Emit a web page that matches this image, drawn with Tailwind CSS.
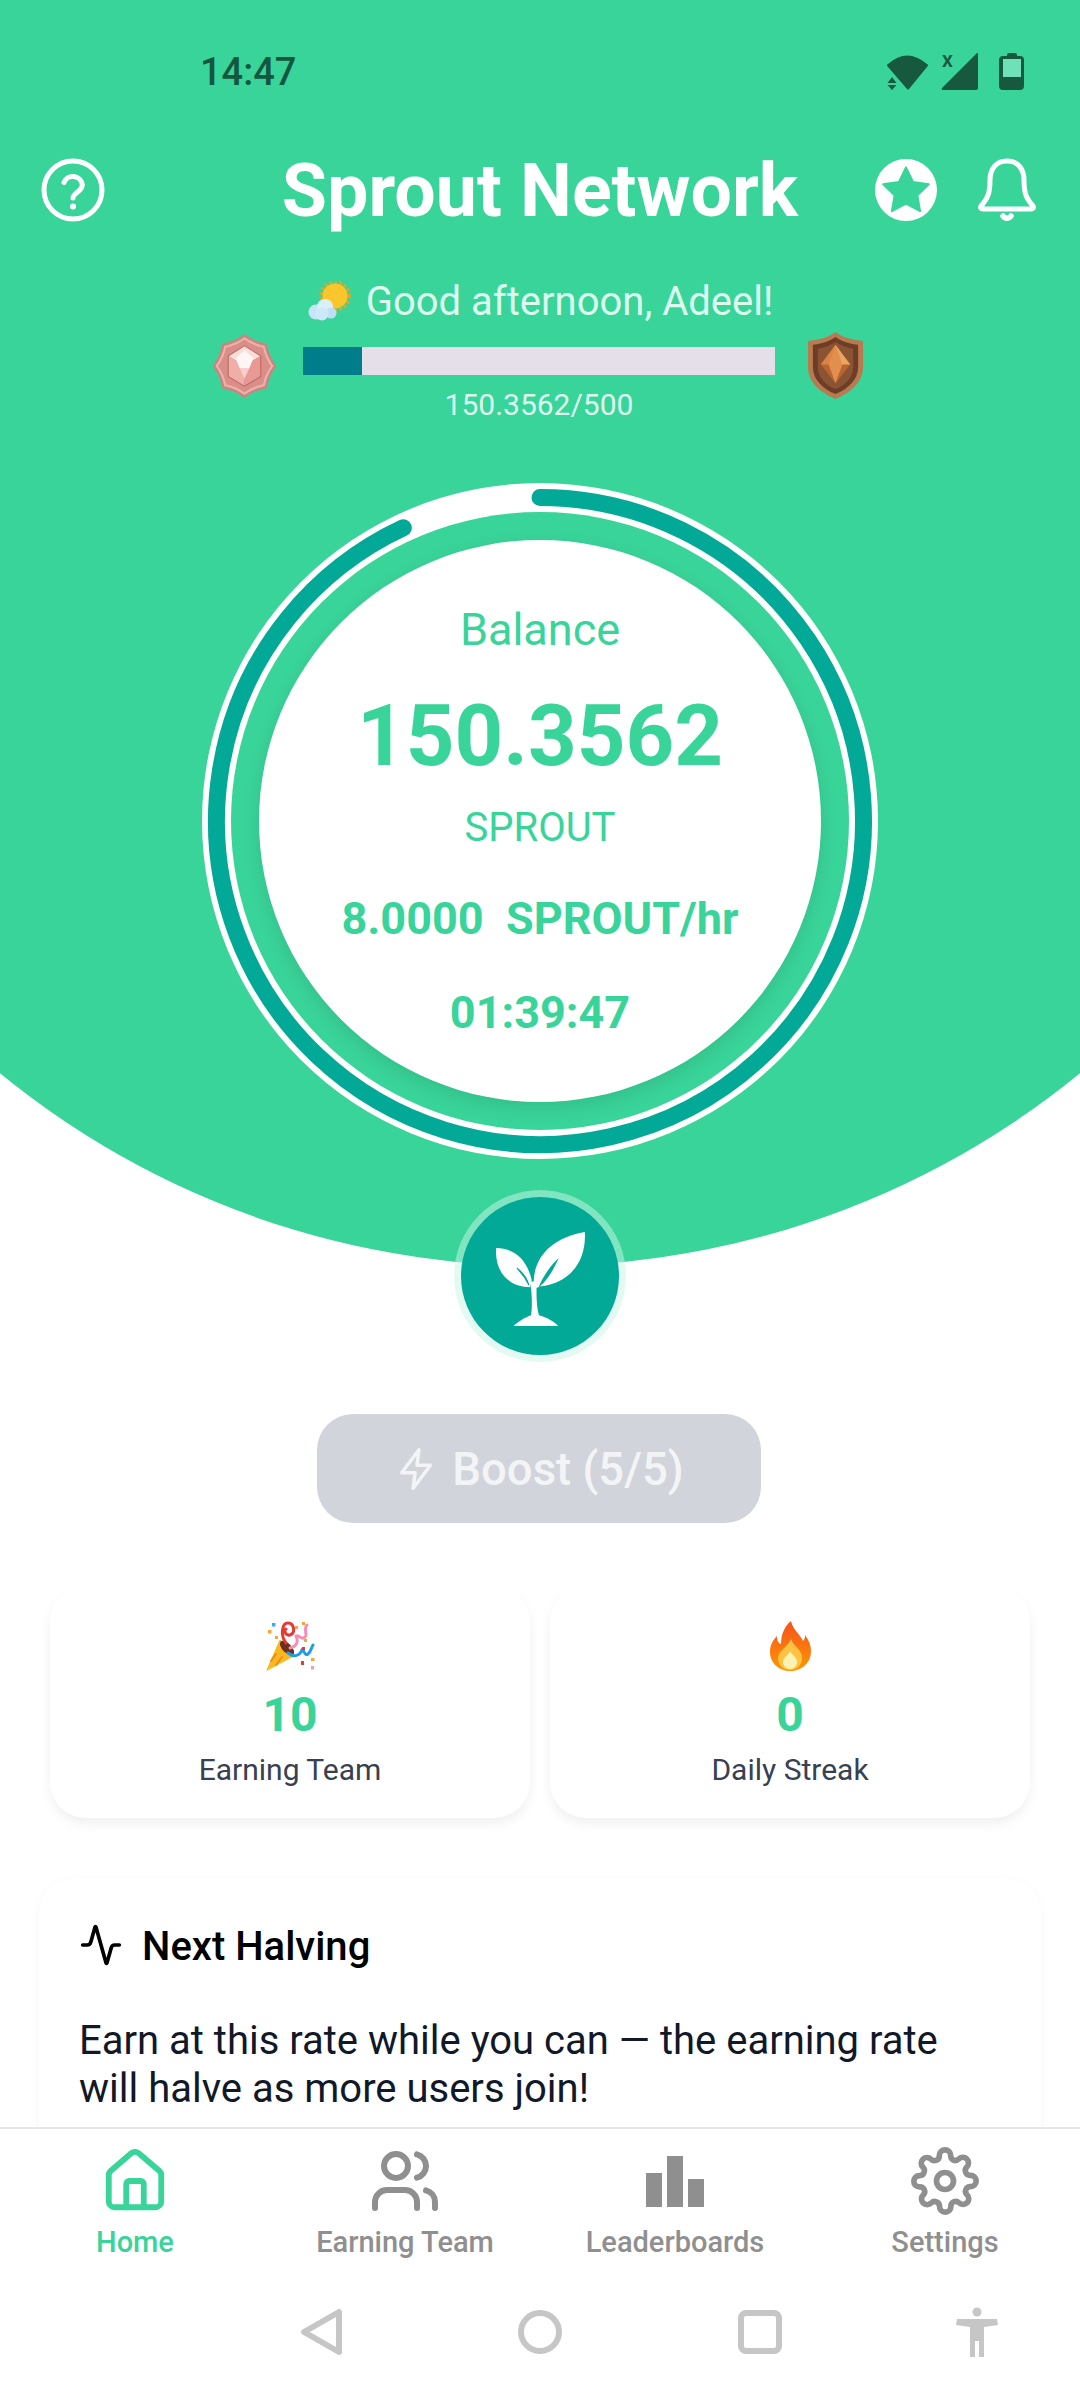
<!DOCTYPE html>
<html><head><meta charset="utf-8"><script src="https://cdn.jsdelivr.net/npm/@tailwindcss/browser@4"></script></head>
<body class="bg-white">
<div class="flex flex-col w-[1080px] h-[2400px] overflow-hidden bg-white font-['Roboto',sans-serif]">
  <main class="relative h-[2127px] shrink-0 overflow-hidden">
    <!-- arch -->
    <div class="absolute left-[-313px] top-[-440px] w-[1706px] h-[1706px] rounded-full bg-[#39d49a]"></div>

    <div class="relative flex flex-col items-center">
      <!-- status bar -->
      <div class="w-full h-[158px] flex items-start justify-between pl-[200px] pr-[50px] pt-[50px] text-[#13573f]">
        <span class="text-[38px] leading-[44px] font-medium">14:47</span>
        <svg width="150" height="42" viewBox="0 0 150 42" fill="#17593f">
          <path d="M27 39 8 17Q6 15 8 14 27-3 47 14q2 1 0 3L29 39q-1 1-2 0Z"/>
          <path d="M7 33l5-7 5 7ZM7 35h10l-5 6Z" fill="#39d49a" stroke="#39d49a" stroke-width="4"/>
          <path d="M7.500 33l4.500-6 4.500 6ZM7.500 35h9l-4.500 5Z"/>
          <path d="M63 40q-2 0-1-2L97 3q1-1 1 1v34q0 2-2 2Z"/>
          <text x="62" y="17" font-family="Roboto" font-size="17" font-weight="700">X</text>
          <path fill-rule="evenodd" d="M127 6V5q0-2 2-2h6q2 0 2 2v1h3q4 0 4 4v26q0 4-4 4h-17q-4 0-4-4V10q0-4 4-4Zm-4 3v18h18V9Z"/>
          <rect x="123" y="9" width="18" height="18" fill="#6fe0b8"/>
        </svg>
      </div>

      <!-- header -->
      <div class="w-full h-[64px] flex items-center justify-between pl-[41px] pr-[44px]">
        <div class="w-[200px] flex">
          <svg width="64" height="64" viewBox="0 0 64 64" fill="none" stroke="#fff" stroke-width="5" stroke-linecap="round" stroke-linejoin="round"><circle cx="32" cy="32" r="29"/><path d="M23 24.500a9.500 9.500 0 0 1 18.300 2.500c0 6.200-9.300 8-9.300 13"/><path d="M32 48.500h.01" stroke-width="6"/></svg>
        </div>
        <h1 class="mt-[2px] ml-[3px] text-[73.500px] leading-[64px] font-bold text-white whitespace-nowrap">Sprout Network</h1>
        <div class="w-[200px] flex items-center justify-end gap-[41px]">
          <svg width="62" height="62" viewBox="0 0 62 62"><circle cx="31" cy="31" r="31" fill="#fff"/><path d="M31 8.500l7 14.500 15.800 2.200-11.400 11.100 2.700 15.800L31 44.600l-14.100 7.500 2.700-15.800L8.200 25.200 24 23Z" fill="#39d49a" stroke="#39d49a" stroke-width="2" stroke-linejoin="round"/></svg>
          <svg width="58" height="64" viewBox="0 0 58 64" fill="none" stroke="#fff" stroke-width="5" stroke-linecap="round" stroke-linejoin="round"><path d="M29 3C18 3 12 11 12 22c0 13-2 18-9 26-1 2 0 3 2 3h48c2 0 3-1 2-3-7-8-9-13-9-26C46 11 40 3 29 3Z"/><path d="M25 58c2 3 6 3 8 0" stroke-width="5.500"/></svg>
        </div>
      </div>

      <!-- greeting -->
      <div class="mt-[57px] h-[46px] flex items-center gap-[15px] text-[40px] leading-[46px] text-[#dcfaed]">
        <svg width="44" height="40" viewBox="0 0 44 40" class="-mt-[2px]">
          <circle cx="28" cy="15" r="14" fill="none" stroke="#f0a21a" stroke-width="3.500" stroke-dasharray="2.400 2.600"/>
          <circle cx="28" cy="15" r="12.500" fill="#f9c62b"/>
          <circle cx="9" cy="31" r="7.500" fill="#c6e5f7"/><circle cx="18" cy="26" r="8" fill="#d9f0fb"/><circle cx="24" cy="32" r="5.500" fill="#bfe0f4"/><circle cx="15" cy="33" r="6.500" fill="#cde9f8"/>
        </svg>
        <span>Good afternoon, Adeel!</span>
      </div>

      <!-- progress row -->
      <div class="mt-[7px] ml-[-4px] flex items-start">
        <svg width="65" height="66" viewBox="0 0 66 66" class="mt-[1px] shrink-0">
          <path d="M33 2Q42 9 54.500 11.500 57 24 64 33 57 42 54.500 54.500 42 57 33 64 24 57 11.500 54.500 9 42 2 33 9 24 11.500 11.500 24 9 33 2Z" fill="#efb0aa" stroke="#c98680" stroke-width="2.500" stroke-linejoin="round"/>
          <path transform="translate(33 33) scale(.84) translate(-33 -33)" d="M33 2Q42 9 54.500 11.500 57 24 64 33 57 42 54.500 54.500 42 57 33 64 24 57 11.500 54.500 9 42 2 33 9 24 11.500 11.500 24 9 33 2Z" fill="#d98e88" stroke="#d98e88" stroke-width="2" stroke-linejoin="round"/>
          <path d="M33 12 50 22.500V44L33 54 16 44V22.500Z" fill="#b9655f"/>
          <path d="M33 13 49 23 33 33 17 23Z" fill="#fbdcd8"/><path d="M49 23V43.500L33 53 33 33Z" fill="#e79a94"/><path d="M17 23V43.500L33 53 33 33Z" fill="#f0aea9"/>
          <path d="M33 17 42 25 38 35H28L24 25Z" fill="#fff6f5"/><path d="M28 35H38L33 46Z" fill="#f9cfcb"/>
        </svg>
        <div class="ml-[26px] w-[472px] pt-[15px] flex flex-col items-center shrink-0">
          <div class="w-full h-[28px] bg-[#e4dfe8]"><div class="w-[59px] h-full bg-[#007d8b]"></div></div>
          <div class="mt-[12px] text-[30px] leading-[36px] text-[#dcfaed]">150.3562/500</div>
        </div>
        <svg width="57" height="67" viewBox="0 0 58 68" class="ml-[32px] shrink-0">
          <path d="M29 0C37 6 47 8 57 9v27c0 15-13 26-28 32C14 62 1 51 1 36V9C11 8 21 6 29 0Z" fill="#b87a4e"/>
          <path d="M29 5C36 10 45 12 52 13v23c0 12-10 22-23 27C16 58 6 48 6 36V13C13 12 22 10 29 5Z" fill="#6e3d28"/>
          <path d="M29 10C35 14 42 16 47 17v19c0 10-8 18-18 22C19 54 11 46 11 36V17C16 16 23 14 29 10Z" fill="#8a5333"/>
          <path d="M29 13 44 33 29 52 14 33Z" fill="#b9652f"/><path d="M29 13 44 33H29Z" fill="#eba562"/><path d="M29 13 14 33H29Z" fill="#d98445"/><path d="M29 13 36 33 29 52 22 33Z" fill="#e18f4e"/>
        </svg>
      </div>

      <!-- balance dial -->
      <div class="relative mt-[60px] w-[676px] h-[676px] shrink-0 rounded-full bg-white flex items-center justify-center">
        <div class="w-[618px] h-[618px] rounded-full bg-[#39d49a] flex items-center justify-center">
          <div class="w-[562px] h-[562px] rounded-full bg-white shadow-[0_6px_18px_rgba(0,0,0,0.1)] flex flex-col items-center pt-[64px] text-[#39d49a]">
            <div class="text-[45px] leading-[52px]">Balance</div>
            <div class="mt-[31px] text-[85px] leading-[98px] font-bold">150.3562</div>
            <div class="mt-[20px] text-[40px] leading-[46px]">SPROUT</div>
            <div class="mt-[42px] text-[45px] leading-[52px] font-bold whitespace-pre">8.0000  SPROUT/hr</div>
            <div class="mt-[42px] text-[45px] leading-[52px] font-bold">01:39:47</div>
          </div>
        </div>
        <svg class="absolute inset-0" width="676" height="676" viewBox="0 0 676 676" fill="none"><path d="M338 14.500A323.500 323.500 0 1 1 201.300 44.800" stroke="#02a997" stroke-width="17" stroke-linecap="round"/></svg>
      </div>

      <!-- sprout button -->
      <div class="mt-[38px] w-[158px] h-[158px] rounded-full bg-[#02a997] shadow-[0_0_0_7px_rgba(200,245,230,0.5)] flex items-center justify-center">
        <svg class="mt-[6px]" width="89" height="94" viewBox="170 157 265 281" fill="#fff">
          <path d="M283 325C275 240 330 175 435 157 440 240 395 310 300 320 330 295 345 260 357 235 335 255 312 285 297 322Z"/>
          <path d="M272 322C200 320 165 270 170 205 225 205 262 240 276 300Z"/>
          <path d="M232 265C250 278 262 295 268 316 258 295 246 280 232 265Z" fill="#02a997" stroke="#02a997" stroke-width="3"/>
          <path d="M272 305H292C289 340 291 385 298 406 320 412 345 425 355 438H222C235 425 258 412 274 406 279 385 277 340 272 305Z"/>
        </svg>
      </div>

      <!-- boost -->
      <div class="mt-[59px] ml-[-2px] w-[444px] h-[109px] rounded-[36px] bg-[#d1d5db] flex items-center justify-center gap-[12px] text-[45.500px] font-medium text-[#f3f4f6]">
        <svg width="46" height="46" viewBox="0 0 24 24" fill="none" stroke="#f3f4f6" stroke-width="1.800" stroke-linecap="round" stroke-linejoin="round"><path d="M13 2 4 14h7l-1 8 9-12h-7l1-8Z"/></svg>
        <span class="mt-[3px]">Boost (5/5)</span>
      </div>

      <!-- stat cards -->
      <div class="mt-[63px] flex gap-[20px]">
        <div class="w-[480px] h-[232px] rounded-[36px] bg-white shadow-[0_6px_12px_rgba(0,0,0,0.06)] flex flex-col items-center pt-[35px]">
          <svg width="49" height="50" viewBox="0 0 49 50" fill="none" stroke-linecap="round" stroke-linejoin="round">
            <path d="M1 49 14 19 29 34Z" fill="#f9b820" stroke="#f9b820"/><path d="M5 40 10 33M10 44 16 36" stroke="#e8901a" stroke-width="2"/>
            <ellipse cx="21" cy="27" rx="4.500" ry="9" transform="rotate(-45 21 27)" fill="#6b2f1e"/>
            <path d="M20 22C14 14 16 2 22 2 28 2 30 12 24 14 19 15 18 9 20 8" stroke="#e53935" stroke-width="3"/>
            <path d="M24 27C30 26 33 21 30 15 33 13 36 20 39 16 42 14 37 8 41 4" stroke="#f48fb1" stroke-width="3"/>
            <path d="M22 32C27 36 33 36 36 29 37 25 38 36 42 33 45 31 45 27 47 24" stroke="#1e9ce8" stroke-width="3"/>
            <g stroke="none"><rect x="6" y="2" width="3.500" height="3.500" fill="#42a5f5"/><rect x="2" y="9" width="3.500" height="3.500" fill="#f4a63a"/><rect x="9" y="15" width="3" height="3" fill="#f4a63a"/><rect x="29" y="5" width="3" height="3" fill="#f4a63a"/><rect x="36" y="1" width="3" height="3" fill="#f4a63a"/><rect x="38" y="18" width="3" height="3" fill="#f4a63a"/><rect x="35" y="40" width="3" height="4" fill="#e53935"/><rect x="45" y="37" width="3.500" height="3" fill="#f4a63a"/><rect x="45" y="45" width="3" height="3.500" fill="#f29bb6"/><rect x="36" y="26" width="3" height="3" fill="#e53935"/></g>
          </svg>
          <div class="mt-[16px] text-[48px] leading-[56px] font-bold text-[#39d49a]">10</div>
          <div class="mt-[9px] text-[30px] leading-[36px] text-[#374151]">Earning Team</div>
        </div>
        <div class="w-[480px] h-[232px] rounded-[36px] bg-white shadow-[0_6px_12px_rgba(0,0,0,0.06)] flex flex-col items-center pt-[35px]">
          <svg width="41" height="50" viewBox="0 0 41 50">
            <defs><linearGradient id="f" x1="0" y1="0" x2="0" y2="1"><stop offset="0" stop-color="#f4511e"/><stop offset="1" stop-color="#ff9800"/></linearGradient></defs>
            <path d="M21 0C23 9 30 13 33 20 35 18 35 16 35 14 39 19 41 25 41 30 41 42 32 50 20 50 9 50 0 42 0 31 0 24 3 19 7 15 7 19 8 22 11 23 11 14 14 6 21 0Z" fill="url(#f)"/>
            <path d="M21 18C23 25 32 28 32 37 32 44 27 49 20 49 13 49 8 44 8 37 8 30 17 27 21 18Z" fill="#ffc341"/>
            <path d="M20 30C22 34 27 36 27 41 27 45 24 48 20 48 16 48 13 45 13 41 13 36 18 35 20 30Z" fill="#fff2b3"/>
          </svg>
          <div class="mt-[16px] text-[48px] leading-[56px] font-bold text-[#39d49a]">0</div>
          <div class="mt-[9px] text-[30px] leading-[36px] text-[#374151]">Daily Streak</div>
        </div>
      </div>

      <!-- halving card -->
      <div class="mt-[60px] w-[1002px] h-[500px] rounded-[36px] bg-white shadow-[0_2px_10px_rgba(0,0,0,0.04)] pl-[41px] pr-[60px] pt-[45px]">
        <div class="flex items-center gap-[19px] h-[44px]">
          <svg class="-ml-[1px]" width="44" height="44" viewBox="0 0 24 24" fill="none" stroke="#000" stroke-width="2" stroke-linecap="round" stroke-linejoin="round"><path d="M22 12h-2.480a2 2 0 0 0-1.930 1.460l-2.350 8.360a.25.25 0 0 1-.480 0L9.240 2.180a.25.25 0 0 0-.480 0l-2.350 8.360A2 2 0 0 1 4.490 12H2"/></svg>
          <span class="mt-[4px] text-[40px] leading-[44px] font-medium text-black">Next Halving</span>
        </div>
        <p class="mt-[50px] -ml-[1px] text-[40px] leading-[48px] text-[#111827]">Earn at this rate while you can — the earning rate will halve as more users join!</p>
      </div>
    </div>
  </main>

  <!-- bottom nav -->
  <nav class="flex-1 bg-white border-t-2 border-[#e5e7eb] relative">
    <div class="grid grid-cols-4 pt-[17px]">
      <div class="flex flex-col items-center text-[#39d49a]">
        <div class="h-[70px] flex items-center"><svg width="70" height="70" viewBox="0 0 24 24" fill="none" stroke="#39d49a" stroke-width="2" stroke-linecap="round" stroke-linejoin="round"><path d="M15 21v-8a1 1 0 0 0-1-1h-4a1 1 0 0 0-1 1v8"/><path d="M3 10a2 2 0 0 1 .709-1.528l7-6a2 2 0 0 1 2.582 0l7 6A2 2 0 0 1 21 10v9a2 2 0 0 1-2 2H5a2 2 0 0 1-2-2z"/></svg></div>
        <span class="mt-[9px] text-[29px] leading-[34px] font-medium">Home</span>
      </div>
      <div class="flex flex-col items-center text-[#8f8f8f]">
        <div class="h-[70px] flex items-center"><svg width="72" height="72" viewBox="0 0 24 24" fill="none" stroke="#8f8f8f" stroke-width="2" stroke-linecap="round" stroke-linejoin="round"><path d="M16 21v-2a4 4 0 0 0-4-4H6a4 4 0 0 0-4 4v2"/><circle cx="9" cy="7" r="4"/><path d="M22 21v-2a4 4 0 0 0-3-3.870"/><path d="M16 3.130a4 4 0 0 1 0 7.750"/></svg></div>
        <span class="mt-[9px] text-[29px] leading-[34px] font-medium">Earning Team</span>
      </div>
      <div class="flex flex-col items-center text-[#8f8f8f]">
        <div class="h-[70px] flex items-center"><svg width="58" height="51" viewBox="0 0 58 51" fill="#8f8f8f"><rect y="17" width="16" height="34"/><rect x="21" width="16" height="51"/><rect x="42" y="23" width="16" height="28"/></svg></div>
        <span class="mt-[9px] text-[29px] leading-[34px] font-medium">Leaderboards</span>
      </div>
      <div class="flex flex-col items-center text-[#8f8f8f]">
        <div class="h-[70px] flex items-center"><svg width="68" height="68" viewBox="0 0 24 24" fill="none" stroke="#8f8f8f" stroke-width="2" stroke-linecap="round" stroke-linejoin="round"><circle cx="12" cy="12" r="3"/><path d="M19.400 15a1.650 1.650 0 0 0 .33 1.820l.06.06a2 2 0 0 1 0 2.830 2 2 0 0 1-2.830 0l-.06-.06a1.650 1.650 0 0 0-1.820-.33 1.650 1.650 0 0 0-1 1.510V21a2 2 0 0 1-2 2 2 2 0 0 1-2-2v-.09A1.650 1.650 0 0 0 9 19.400a1.650 1.650 0 0 0-1.820.33l-.06.06a2 2 0 0 1-2.830 0 2 2 0 0 1 0-2.830l.06-.06a1.650 1.650 0 0 0 .33-1.820 1.650 1.650 0 0 0-1.510-1H3a2 2 0 0 1-2-2 2 2 0 0 1 2-2h.09A1.650 1.650 0 0 0 4.600 9a1.650 1.650 0 0 0-.33-1.820l-.06-.06a2 2 0 0 1 0-2.830 2 2 0 0 1 2.830 0l.06.06a1.650 1.650 0 0 0 1.820.33H9a1.650 1.650 0 0 0 1-1.510V3a2 2 0 0 1 2-2 2 2 0 0 1 2 2v.09a1.650 1.650 0 0 0 1 1.510 1.650 1.650 0 0 0 1.820-.33l.06-.06a2 2 0 0 1 2.830 0 2 2 0 0 1 0 2.830l-.06.06a1.650 1.650 0 0 0-.33 1.820V9a1.650 1.650 0 0 0 1.510 1H21a2 2 0 0 1 2 2 2 2 0 0 1-2 2h-.09a1.650 1.650 0 0 0-1.510 1z"/></svg></div>
        <span class="mt-[9px] text-[29px] leading-[34px] font-medium">Settings</span>
      </div>
    </div>
    <!-- system nav -->
    <div class="mt-[48px] pl-[301px] flex items-center">
      <svg width="41" height="46" viewBox="0 0 41 46" fill="none" stroke="#c6c6c6" stroke-width="6" stroke-linejoin="round"><path d="M38 3V43L3 23Z"/></svg>
      <svg class="ml-[176px]" width="44" height="44" viewBox="0 0 44 44" fill="none" stroke="#c6c6c6" stroke-width="6"><circle cx="22" cy="22" r="19"/></svg>
      <svg class="ml-[176px]" width="44" height="44" viewBox="0 0 44 44" fill="none" stroke="#c6c6c6" stroke-width="6"><rect x="3" y="3" width="38" height="38" rx="5"/></svg>
      <svg class="ml-[173px]" width="44" height="50" viewBox="0 0 44 50" fill="#c6c6c6"><circle cx="22" cy="5" r="4.500"/><path d="M2 12 1 18 15 20V50H20V34H24V50H29V20L43 18 42 12Z"/></svg>
    </div>
  </nav>
</div>
</body></html>
